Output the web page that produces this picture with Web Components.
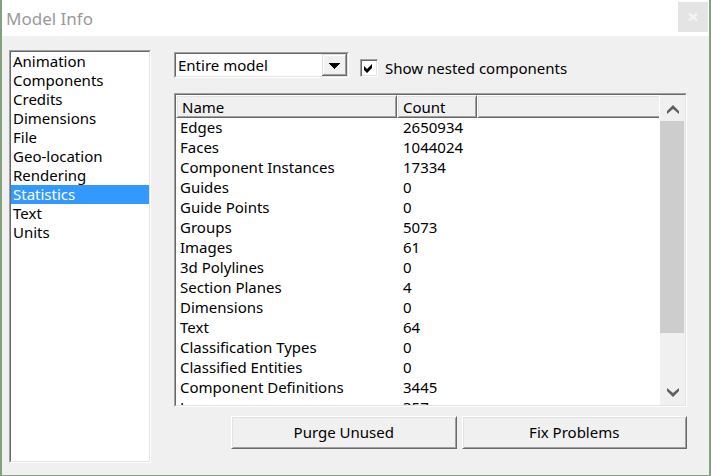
<!DOCTYPE html>
<html lang="en">
<head>
<meta charset="utf-8">
<title>Model Info</title>
<style>
html, body { margin: 0; height: 100%; }
body { font: 15px/20px "Noto Sans", "Open Sans", sans-serif; color: #000; background: #fff;
  --face: #f0f0f0; --light: #e3e3e3; --shade: #a0a0a0; --dark: #696969; }
</style>
</head>
<body>
<model-info-window></model-info-window>
<script>
const define = (name, html, setup) => {
  const template = document.createElement('template');
  template.innerHTML = `<style>
    *, *::before { box-sizing: border-box; }
    button, select, input { font: inherit; color: inherit; margin: 0; border-radius: 0; }
    [hidden] { display: none; }
  </style>` + html;
  customElements.define(name, class extends HTMLElement {
    constructor() {
      super();
      this.attachShadow({ mode: 'open' }).append(template.content.cloneNode(true));
    }
    connectedCallback() { if (setup) setup(this, this.shadowRoot); }
  });
};

define('sunken-panel', `<style>
  :host { display: block; box-sizing: border-box; min-height: 0; min-width: 0; border: 1px solid;
    border-color: var(--shade) #fff #fff var(--shade); }
  .inner { height: 100%; background: #fff; display: flex; overflow: hidden; border: 1px solid;
    border-color: var(--dark) var(--light) var(--light) var(--dark); }
  ::slotted(*) { flex: 1; min-width: 0; }
</style><div class="inner"><slot></slot></div>`);

define('raised-button', `<style>
  :host { display: block; }
  button { width: 100%; height: 33px; padding: 0 0 2px; background: var(--face); border: 1px solid;
    border-color: #fff var(--dark) var(--dark) #fff;
    box-shadow: inset 1px 1px var(--light), inset -1px -1px var(--shade); }
</style><button type="button"><slot></slot></button>`);

define('title-bar', `<style>
  :host { display: flex; justify-content: space-between; height: 36px; background: #fff; }
  h1 { margin: 0; padding: 7px 0 0 4px; font-size: 17px; line-height: 24px; font-weight: 400; color: #999; }
  button { width: 30px; height: 30px; margin: 2px 1px 0 0; padding: 0; border: 0; background: #e4e4e4;
    display: grid; place-items: center; }
</style><h1><slot></slot></h1>
<button type="button" aria-label="Close"><svg width="10" height="8" viewBox="0 0 10 8"><path d="M1 .5 9 7.5M9 .5 1 7.5" stroke="#f4f4f4" stroke-width="2.4"/></svg></button>`);

define('page-list', `<style>
  :host { display: block; }
  button { display: block; width: 100%; height: 19px; padding: 0 0 0 2px; border: 0; background: none;
    line-height: 19px; text-align: left; }
  button[aria-selected=true] { background: #3399ff; color: #fff; }
</style><div role="listbox" aria-label="Pages"></div>`, (host, root) => {
  const box = root.querySelector('div');
  box.replaceChildren(...['Animation', 'Components', 'Credits', 'Dimensions', 'File', 'Geo-location',
    'Rendering', 'Statistics', 'Text', 'Units'].map(text => {
    const b = document.createElement('button');
    b.type = 'button';
    b.textContent = text;
    b.setAttribute('role', 'option');
    b.setAttribute('aria-selected', text === 'Statistics');
    b.onclick = () => { for (const o of box.children) o.setAttribute('aria-selected', o === b); };
    return b;
  }));
});

define('scope-select', `<style>
  :host { display: grid; height: 22px; }
  select, svg { grid-area: 1 / 1; }
  select { appearance: none; width: 100%; height: 22px; border: 0; padding: 0 26px 0 2px; background: #fff; outline: 0; }
  svg { justify-self: end; pointer-events: none; }
</style><select aria-label="Scope"><option>Entire model</option><option>Only components</option></select>
<svg width="25" height="22" shape-rendering="crispEdges"><path fill="#f0f0f0" d="M0 0h25v22H0z"/>
<path fill="none" stroke="#e3e3e3" d="M.5 21V.5H24"/><path fill="none" stroke="#fff" d="M1.5 20V1.5H23"/>
<path fill="none" stroke="#a0a0a0" d="M1 20.5H23.5V1"/><path fill="none" stroke="#696969" d="M0 21.5H24.5V0"/>
<path d="M6 9h12l-6 6z"/></svg>`);

define('nested-check', `<style>
  :host { display: block; }
  label { display: flex; align-items: center; gap: 7px; }
  input { appearance: none; width: 18px; height: 18px; border: 1px solid;
    border-color: var(--shade) #fff #fff var(--shade);
    box-shadow: inset 1px 1px var(--dark), inset -1px -1px var(--light); background: #fff; }
  input:checked { background: #fff url("data:image/svg+xml,%3Csvg xmlns='http://www.w3.org/2000/svg' width='16' height='16'%3E%3Cpath d='M3 6l3 3 5-5v4l-5 5-3-3z'/%3E%3C/svg%3E") no-repeat; }
</style><label><input type="checkbox" checked><slot></slot></label>`);

define('scroll-strip', `<style>
  :host { display: flex; flex-direction: column; background: var(--face); border-left: 1px solid #fff; }
  button { height: 26px; flex: none; padding: 0; border: 0; background: none; display: grid; place-items: center; }
  .up { padding-top: 3px; }
  .track { flex: 1; min-height: 0; margin-right: 1px; }
  .thumb { height: 82%; background: #cdcdcd; }
  path { fill: #606060; }
</style>
<button class="up" type="button" aria-label="Scroll up"><svg width="12" height="9"><path d="M0 6 6 0l6 6v3L6 4 0 9z"/></svg></button>
<div class="track"><div class="thumb"></div></div>
<button type="button" aria-label="Scroll down"><svg width="12" height="9"><path d="M0 0l6 5 6-5v3l-6 6-6-6z"/></svg></button>`);

define('stats-table', `<style>
  :host { display: block; overflow: hidden; }
  table { width: 100%; border-collapse: separate; border-spacing: 0; table-layout: fixed; }
  th, td { padding: 0; font-weight: 400; text-align: left; white-space: nowrap; }
  th { height: 23px; padding-left: 5px; background: var(--face); border: 1px solid;
    border-color: #fff var(--dark) var(--dark) #fff;
    box-shadow: inset 1px 1px var(--light), inset -1px -1px var(--shade); }
  th:last-child { border-right: 0; box-shadow: inset 1px 1px var(--light), inset 0 -1px var(--shade); }
  td { height: 20px; padding-left: 4px; line-height: 18px; vertical-align: top; }
  td + td { padding-left: 6px; }
  .name { width: 221px; } .count { width: 80px; }
</style>
<table><colgroup><col class="name"><col class="count"><col></colgroup>
<thead><tr><th>Name</th><th>Count</th><th></th></tr></thead><tbody></tbody></table>`, (host, root) => {
  const rows = [['Edges', 2650934], ['Faces', 1044024], ['Component Instances', 17334], ['Guides', 0],
    ['Guide Points', 0], ['Groups', 5073], ['Images', 61], ['3d Polylines', 0], ['Section Planes', 4],
    ['Dimensions', 0], ['Text', 64], ['Classification Types', 0], ['Classified Entities', 0],
    ['Component Definitions', 3445], ['Layers', 357]];
  root.querySelector('tbody').innerHTML = rows.map(([n, c]) => `<tr><td>${n}</td><td>${c}</td></tr>`).join('');
});

define('model-info-window', `<style>
  :host { display: flex; flex-direction: column; height: 100vh; box-sizing: border-box;
    border: solid #82a17c; border-width: 0 2px 1px; background: var(--face); }
  main { flex: 1; min-height: 0; display: grid; grid-template-columns: 142px minmax(0, 1fr); gap: 23px;
    padding: 14px 22px 12px 7px; }
  section { display: flex; flex-direction: column; min-height: 0; padding: 2px 0 14px; }
  .options { display: flex; align-items: center; gap: 11px; height: 26px; margin-bottom: 15px; }
  .options sunken-panel { width: 175px; height: 26px; }
  nested-check { padding-top: 6px; }
  .table { flex: 1; }
  scroll-strip { flex: 0 0 26px; }
  .actions { display: grid; grid-template-columns: 1fr 1fr; gap: 5px; padding: 9px 0 0 57px; }
</style>
<title-bar>Model Info</title-bar>
<main>
  <sunken-panel><page-list></page-list></sunken-panel>
  <section>
    <div class="options">
      <sunken-panel><scope-select></scope-select></sunken-panel>
      <nested-check>Show nested components</nested-check>
    </div>
    <sunken-panel class="table"><stats-table></stats-table><scroll-strip></scroll-strip></sunken-panel>
    <div class="actions"><raised-button>Purge Unused</raised-button><raised-button>Fix Problems</raised-button></div>
  </section>
</main>`);
</script>
</body>
</html>
